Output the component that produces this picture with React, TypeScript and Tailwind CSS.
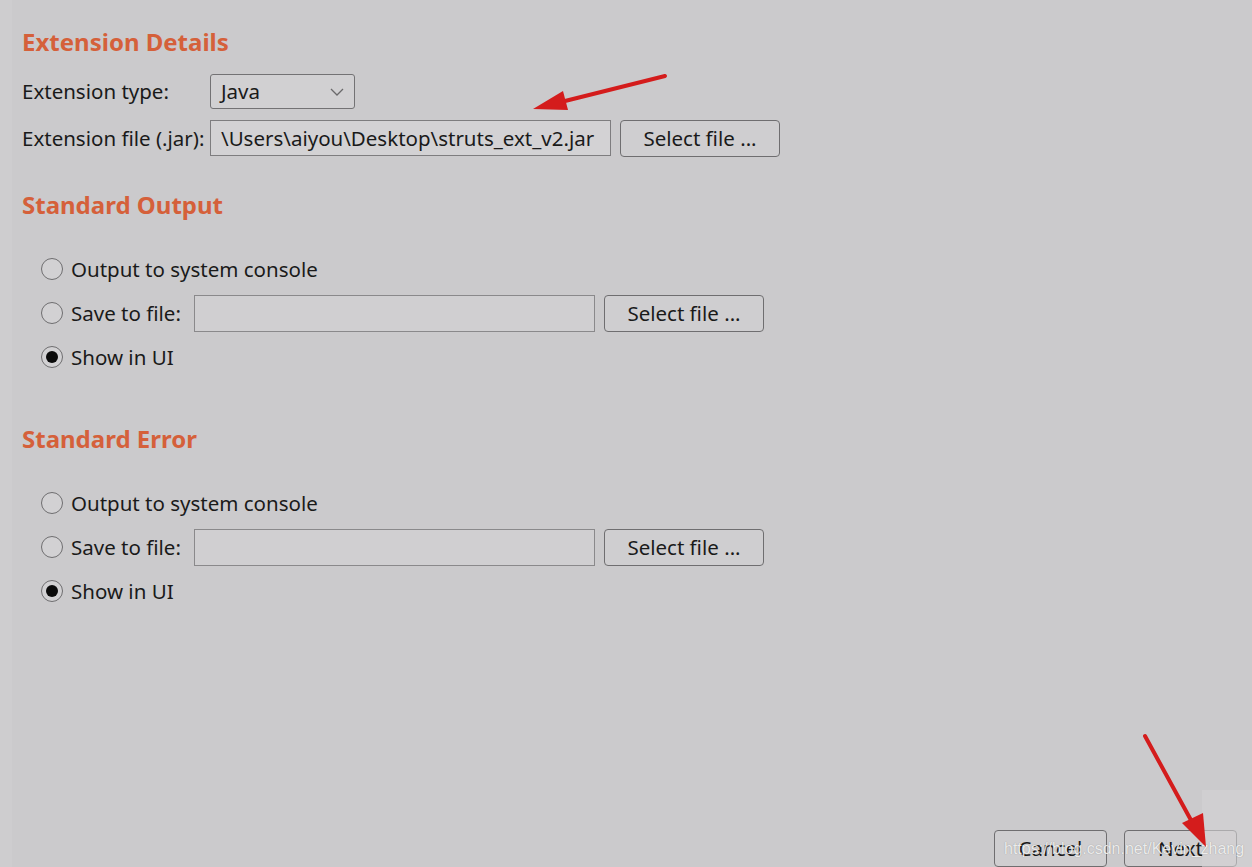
import React from "react";

function Radio({ checked }: { checked?: boolean }) {
  return (
    <span className="w-[22px] h-[22px] rounded-full border border-[#6f6e70] bg-[#d2d1d3] flex items-center justify-center shrink-0">
      {checked && <span className="w-[12px] h-[12px] rounded-full bg-[#0a0a0a]" />}
    </span>
  );
}

function Btn({ children, w }: { children: React.ReactNode; w: string }) {
  return (
    <button className={`${w} h-[37px] rounded-[4px] border border-[#6f6e70] bg-[#cfced0] text-[20.5px] text-[#1a1a1a] flex items-center justify-center`}>
      {children}
    </button>
  );
}

function Section() {
  return (
    <div className="mt-[28px] flex flex-col pl-[19px]">
      <div className="h-[44px] flex items-center">
        <Radio />
        <span className="ml-[8px]">Output to system console</span>
      </div>
      <div className="h-[44px] flex items-center">
        <Radio />
        <span className="ml-[8px] w-[123px]">Save to file:</span>
        <div className="w-[401px] h-[37px] border border-[#8a898b] bg-[#d0cfd1]" />
        <div className="ml-[9px]">
          <Btn w="w-[160px]">Select file ...</Btn>
        </div>
      </div>
      <div className="h-[44px] flex items-center">
        <Radio checked />
        <span className="ml-[8px]">Show in UI</span>
      </div>
    </div>
  );
}

export default function App() {
  return (
    <div className="w-[1252px] h-[867px] bg-[#cbcacc] relative overflow-hidden font-['Segoe_UI','Noto_Sans',sans-serif] text-[20.5px] text-[#1a1a1a] flex flex-col">
      <div className="absolute left-0 top-0 w-[12px] h-full bg-[#cecdcf]" />
      <div className="relative pl-[22px] pt-[28px] flex flex-col">
        <h2 className="text-[24px] leading-[28px] font-bold text-[#d5603a]">Extension Details</h2>
        <div className="mt-[18px] flex items-center h-[35px]">
          <span className="w-[188px]">Extension type:</span>
          <div className="w-[145px] h-[35px] rounded-[3px] border border-[#737274] bg-[#d1d0d2] flex items-center justify-between pl-[10px] pr-[10px]">
            <span>Java</span>
            <svg width="14" height="8" viewBox="0 0 14 8" fill="none">
              <path d="M1 1l6 6 6-6" stroke="#6a696b" strokeWidth="1.3" />
            </svg>
          </div>
        </div>
        <div className="mt-[11px] flex items-center h-[36px]">
          <span className="w-[188px]">Extension file (.jar):</span>
          <div className="w-[401px] h-[36px] border border-[#7e7d7f] bg-[#d3d2d4] flex items-center pl-[10px] overflow-hidden whitespace-nowrap">
            \Users\aiyou\Desktop\struts_ext_v2.jar
          </div>
          <div className="ml-[9px]">
            <Btn w="w-[160px]">Select file ...</Btn>
          </div>
        </div>

        <h2 className="mt-[35px] text-[24px] leading-[28px] font-bold text-[#d5603a]">Standard Output</h2>
        <Section />

        <h2 className="mt-[46px] text-[24px] leading-[28px] font-bold text-[#d5603a]">Standard Error</h2>
        <Section />
      </div>

      <div className="mt-auto relative flex justify-end gap-[17px] pr-[15px]">
        <Btn w="w-[113px]">Cancel</Btn>
        <Btn w="w-[113px]">Next</Btn>
      </div>

      <div className="absolute left-[1202px] top-[790px] w-[50px] h-[77px] bg-[#d3d2d4] opacity-60" />

      <div className="absolute left-[1004px] top-[838px] text-[16px] leading-[22px] font-['Liberation_Sans',sans-serif] text-[#f0f0f0] opacity-90 [text-shadow:0_0_1px_rgba(0,0,0,0.35)] whitespace-nowrap">
        https://blog.csdn.net/Kevin_zhang
      </div>

      <svg className="absolute left-0 top-0 pointer-events-none" width="1252" height="867">
        <line x1="665" y1="76" x2="565" y2="101" stroke="#d41c1c" strokeWidth="4" strokeLinecap="round" />
        <polygon points="533,109 563,91 568,110" fill="#d41c1c" />
        <line x1="1145" y1="736" x2="1192" y2="822" stroke="#d41c1c" strokeWidth="4" strokeLinecap="round" />
        <polygon points="1206,847 1182,823 1203,813" fill="#d41c1c" />
      </svg>
    </div>
  );
}
